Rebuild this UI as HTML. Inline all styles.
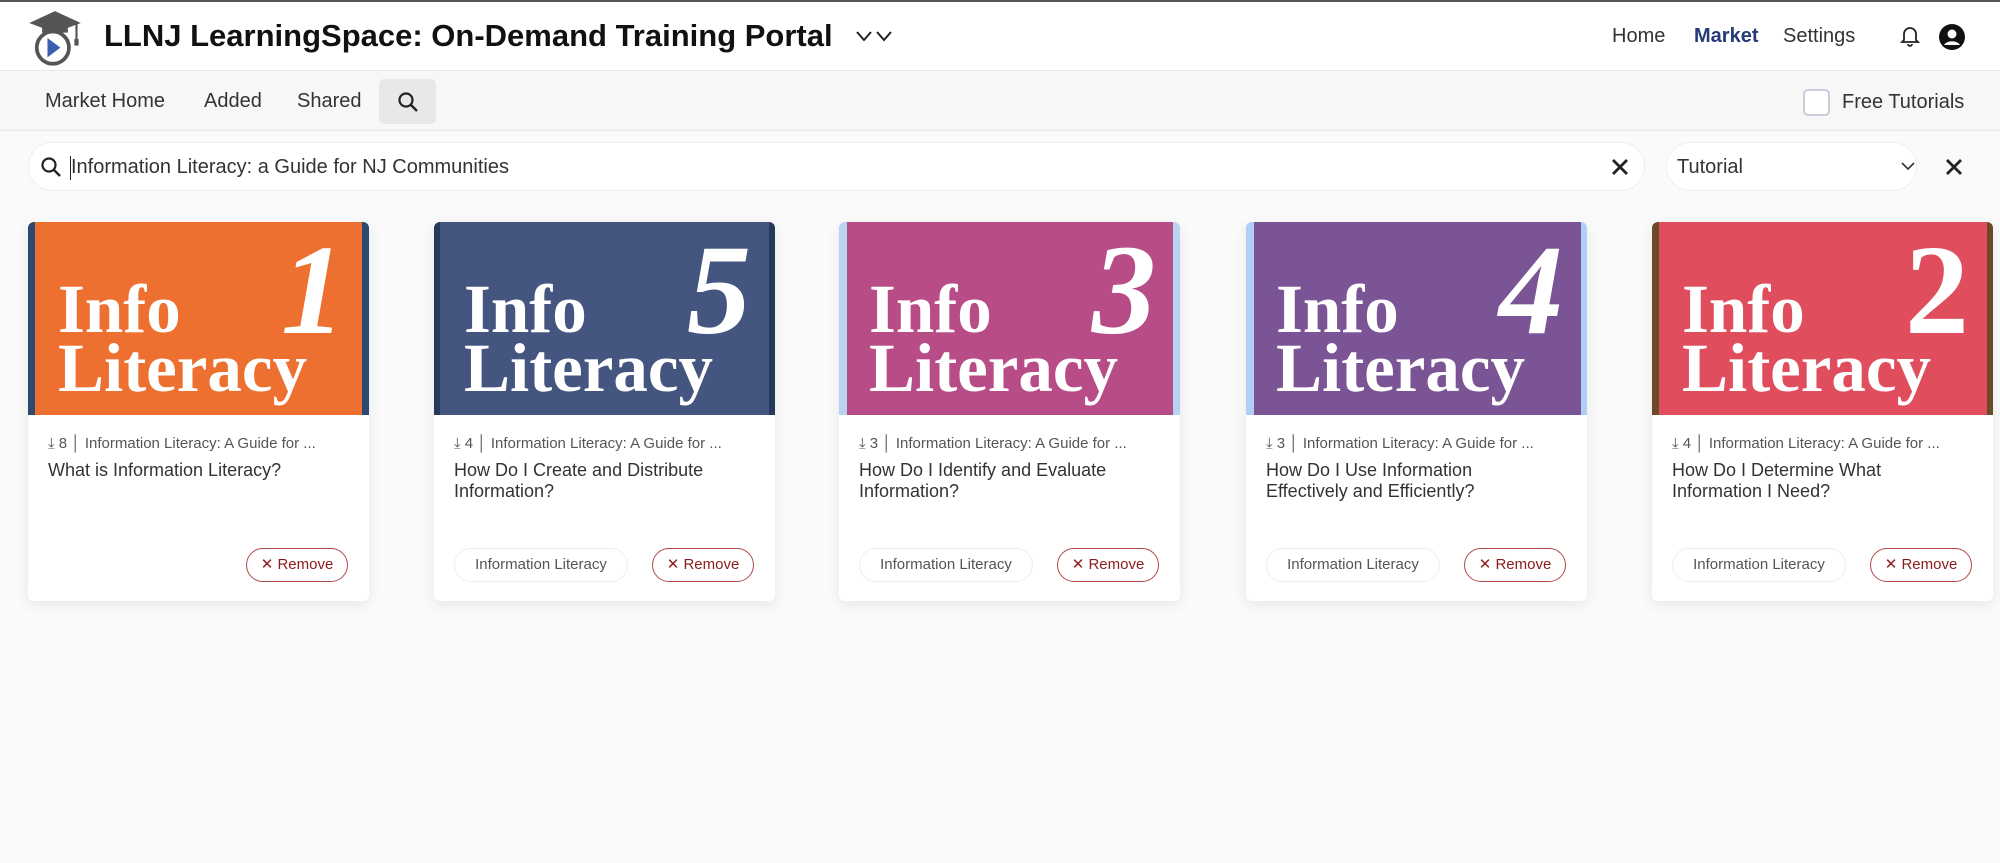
<!DOCTYPE html>
<html><head><meta charset="utf-8"><style>
*{box-sizing:border-box;margin:0;padding:0}
body{width:2000px;height:863px;background:#fafafa;font-family:"Liberation Sans",sans-serif;position:relative;overflow:hidden;color:#333}
.abs{position:absolute}
.hdr{left:0;top:0;width:2000px;height:71px;background:#fff;border-top:2px solid #555;border-bottom:1px solid #e8e8e8}
.sub{left:0;top:71px;width:2000px;height:60px;background:#f7f7f7;border-bottom:1px solid #e6e6e6}
.nav{font-size:20px;color:#333;top:25px}
.card{top:222px;width:341px;height:379px;background:#fff;border-radius:6px;box-shadow:0 4px 14px rgba(0,0,0,.08);overflow:hidden}
.img{position:absolute;left:0;top:0;width:341px;height:193px}
.in{position:absolute;top:0;bottom:0}
.info{position:absolute;left:30px;font-family:"Liberation Serif",serif;font-weight:bold;color:#fff;font-size:69px;line-height:1}
.num{position:absolute;right:24px;top:4px;font-family:"Liberation Serif",serif;font-weight:bold;font-style:italic;color:#fff;font-size:128px;line-height:1}
.meta{position:absolute;left:20px;top:213px;font-size:15px;color:#555;white-space:nowrap}
.ttl{position:absolute;left:20px;top:238px;width:270px;font-size:18px;line-height:21px;color:#333}
.rm{position:absolute;right:21px;top:326px;width:102px;height:34px;border:1px solid #b04a4a;border-radius:17px;color:#8b1c1c;font-size:15px;text-align:center;line-height:32px}
.tag{position:absolute;left:20px;top:326px;width:174px;height:34px;border:1px solid #eee;border-radius:17px;color:#555;font-size:15px;text-align:center;line-height:32px}
</style></head><body>
<div class="abs hdr"></div>
<svg class="abs" style="left:27px;top:9px" width="56" height="58" viewBox="0 0 52 54">
<polygon points="26,2 50,13 26,22 2,13" fill="#555"/>
<rect x="14" y="14" width="24" height="8" fill="#555"/>
<line x1="46" y1="14" x2="46" y2="30" stroke="#555" stroke-width="2"/><rect x="44" y="28" width="4" height="6" fill="#555"/>
<circle cx="24" cy="36" r="15" fill="#fff" stroke="#555" stroke-width="3.5"/>
<polygon points="19,27 19,45 31,36" fill="#3a5fb0"/>
</svg>
<div class="abs" style="left:104px;top:18px;font-size:31px;font-weight:bold;color:#111">LLNJ LearningSpace: On-Demand Training Portal</div>
<svg class="abs" style="left:855px;top:29px" width="40" height="14" viewBox="0 0 40 14"><path d="M2 3 L9 11 L16 3 M22 3 L29 11 L36 3" fill="none" stroke="#222" stroke-width="2"/></svg>
<div class="abs nav" style="left:1612px">Home</div>
<div class="abs nav" style="left:1694px;color:#263a78;font-weight:bold">Market</div>
<div class="abs nav" style="left:1783px">Settings</div>
<svg class="abs" style="left:1900px;top:25px" width="20" height="22" viewBox="0 0 20 22"><path d="M4 15 V9 a6 6 0 0 1 12 0 V15 L18 17 H2 Z M8 19 a2 2 0 0 0 4 0" fill="none" stroke="#222" stroke-width="1.8"/></svg>
<svg class="abs" style="left:1939px;top:24px" width="26" height="26" viewBox="0 0 26 26"><circle cx="13" cy="13" r="13" fill="#111"/><circle cx="13" cy="10" r="4.5" fill="#fff"/><path d="M5 21 a9 7 0 0 1 16 0" fill="#fff"/></svg>

<div class="abs sub"></div>
<div class="abs nav" style="left:45px;top:90px">Market Home</div>
<div class="abs nav" style="left:204px;top:90px">Added</div>
<div class="abs nav" style="left:297px;top:90px">Shared</div>
<div class="abs" style="left:379px;top:79px;width:57px;height:45px;background:#e8e8e8;border-radius:5px"></div>
<svg class="abs" style="left:397px;top:91px" width="22" height="22" viewBox="0 0 22 22"><circle cx="9" cy="9" r="6.5" fill="none" stroke="#222" stroke-width="2.2"/><line x1="14" y1="14" x2="20" y2="20" stroke="#222" stroke-width="2.4"/></svg>
<div class="abs" style="left:1803px;top:89px;width:27px;height:27px;border:2px solid #ccd;border-radius:5px;background:#fff"></div>
<div class="abs nav" style="left:1842px;top:91px">Free Tutorials</div>

<div class="abs" style="left:28px;top:142px;width:1617px;height:49px;background:#fff;border:1px solid #eee;border-radius:25px"></div>
<svg class="abs" style="left:40px;top:156px" width="22" height="22" viewBox="0 0 22 22"><circle cx="9" cy="9" r="6.5" fill="none" stroke="#222" stroke-width="2.2"/><line x1="14" y1="14" x2="20" y2="20" stroke="#222" stroke-width="2.4"/></svg>
<div class="abs" style="left:70px;top:156px;width:1px;height:24px;background:#222"></div>
<div class="abs" style="left:71px;top:156px;font-size:20px;color:#333">Information Literacy: a Guide for NJ Communities</div>
<svg class="abs" style="left:1611px;top:158px" width="18" height="18" viewBox="0 0 18 18"><path d="M2 2 L16 16 M16 2 L2 16" stroke="#222" stroke-width="2.8"/></svg>
<div class="abs" style="left:1666px;top:142px;width:251px;height:49px;background:#fff;border:1px solid #eee;border-radius:25px"></div>
<div class="abs" style="left:1677px;top:156px;font-size:20px;color:#333">Tutorial</div>
<svg class="abs" style="left:1901px;top:162px" width="14" height="9" viewBox="0 0 14 9"><path d="M1 1 L7 7 L13 1" fill="none" stroke="#333" stroke-width="1.6"/></svg>
<svg class="abs" style="left:1945px;top:158px" width="18" height="18" viewBox="0 0 18 18"><path d="M2 2 L16 16 M16 2 L2 16" stroke="#222" stroke-width="2.8"/></svg>

<div class="abs card" style="left:28px"><div class="img" style="background:#2c4a70"><div class="in" style="left:7px;right:7px;background:#ed7030"></div>
<div class="info" style="top:53px">Info</div><div class="info" style="top:112px">Literacy</div><div class="num">1</div></div>
<div class="meta">⤓ 8 │ Information Literacy: A Guide for ...</div><div class="ttl">What is Information Literacy?</div><div class="rm">✕ Remove</div></div>

<div class="abs card" style="left:434px"><div class="img" style="background:#253a5a"><div class="in" style="left:6px;right:6px;background:#44557f"></div>
<div class="info" style="top:53px">Info</div><div class="info" style="top:112px">Literacy</div><div class="num">5</div></div>
<div class="meta">⤓ 4 │ Information Literacy: A Guide for ...</div><div class="ttl">How Do I Create and Distribute Information?</div><div class="tag">Information Literacy</div><div class="rm">✕ Remove</div></div>

<div class="abs card" style="left:839px"><div class="img" style="background:#b8d4f0"><div class="in" style="left:8px;right:7px;background:#b84c87"></div>
<div class="info" style="top:53px">Info</div><div class="info" style="top:112px">Literacy</div><div class="num">3</div></div>
<div class="meta">⤓ 3 │ Information Literacy: A Guide for ...</div><div class="ttl">How Do I Identify and Evaluate Information?</div><div class="tag">Information Literacy</div><div class="rm">✕ Remove</div></div>

<div class="abs card" style="left:1246px"><div class="img" style="background:#b0cff5"><div class="in" style="left:8px;right:6px;background:#7a5494"></div>
<div class="info" style="top:53px">Info</div><div class="info" style="top:112px">Literacy</div><div class="num">4</div></div>
<div class="meta">⤓ 3 │ Information Literacy: A Guide for ...</div><div class="ttl">How Do I Use Information Effectively and Efficiently?</div><div class="tag">Information Literacy</div><div class="rm">✕ Remove</div></div>

<div class="abs card" style="left:1652px"><div class="img" style="background:#6b4a2a"><div class="in" style="left:7px;right:6px;background:#e04e5e"></div>
<div class="info" style="top:53px">Info</div><div class="info" style="top:112px">Literacy</div><div class="num" style="font-style:normal">2</div></div>
<div class="meta">⤓ 4 │ Information Literacy: A Guide for ...</div><div class="ttl">How Do I Determine What Information I Need?</div><div class="tag">Information Literacy</div><div class="rm">✕ Remove</div></div>
</body></html>
